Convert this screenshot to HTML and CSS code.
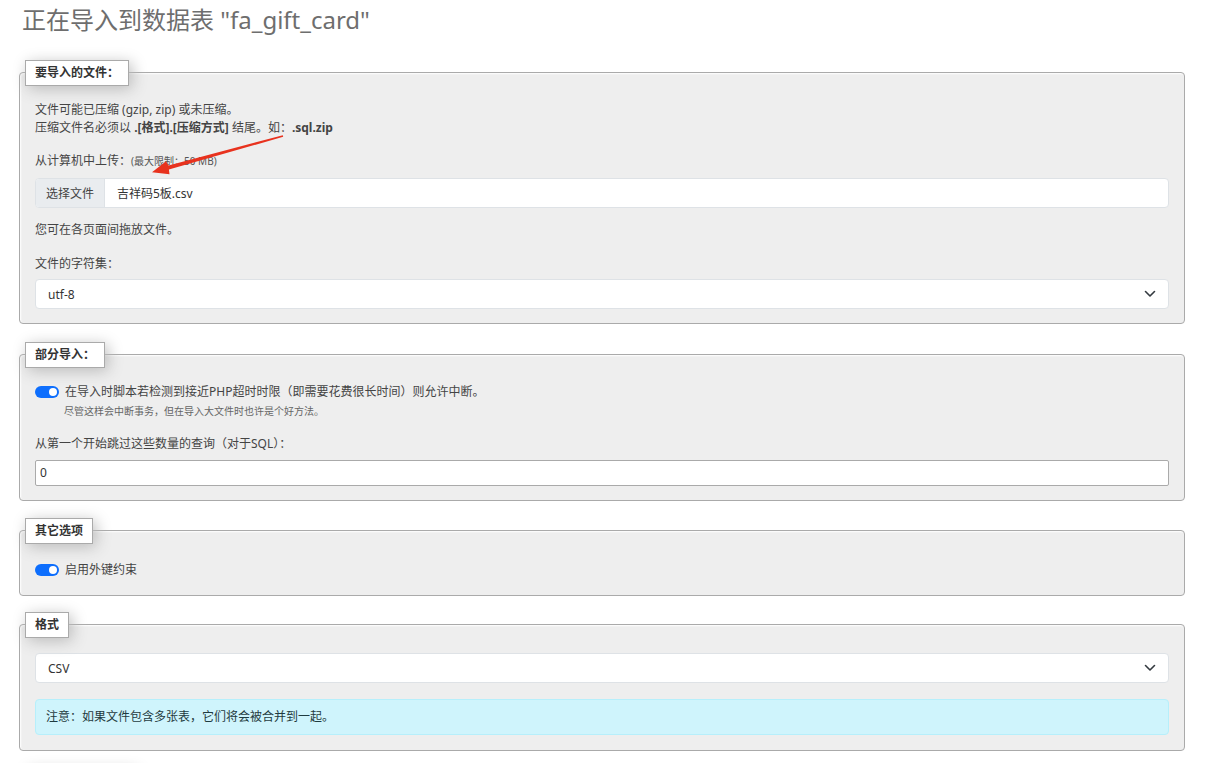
FILE: index.html
```html
<!DOCTYPE html>
<html lang="zh-CN">
<head>
<meta charset="utf-8">
<title>导入</title>
<link rel="stylesheet" href="styles.css">
</head>
<body>
<div class="page">
  <h2 class="title">正在导入到数据表 "fa_gift_card"</h2>

  <section class="fs fs-file">
    <div class="legend">要导入的文件：</div>
    <div class="box">
      <p class="line">文件可能已压缩 (gzip, zip) 或未压缩。</p>
      <p class="line">压缩文件名必须以 <b>.[格式].[压缩方式]</b> 结尾。如：<b>.sql.zip</b></p>
      <p class="line label-upload">从计算机中上传：<span class="small">(最大限制：50 MB)</span></p>
      <div class="file-group">
        <span class="file-btn">选择文件</span>
        <span class="file-name">吉祥码5板.csv</span>
      </div>
      <p class="line drop">您可在各页面间拖放文件。</p>
      <p class="line charset">文件的字符集：</p>
      <div class="select">
        <span>utf-8</span>
        <svg class="chev" width="12" height="8" viewBox="0 0 12 8"><path d="M1.5 1.5 6 6l4.5-4.5" fill="none" stroke="#343a40" stroke-width="1.6" stroke-linecap="round" stroke-linejoin="round"/></svg>
      </div>
    </div>
  </section>

  <section class="fs fs-partial">
    <div class="legend">部分导入：</div>
    <div class="box">
      <div class="switch-row">
        <span class="switch"><span class="knob"></span></span>
        <span>在导入时脚本若检测到接近PHP超时时限（即需要花费很长时间）则允许中断。</span>
      </div>
      <p class="hint">尽管这样会中断事务，但在导入大文件时也许是个好方法。</p>
      <p class="line skip">从第一个开始跳过这些数量的查询（对于SQL）：</p>
      <div class="num-input">0</div>
    </div>
  </section>

  <section class="fs fs-other">
    <div class="legend">其它选项</div>
    <div class="box">
      <div class="switch-row">
        <span class="switch"><span class="knob"></span></span>
        <span>启用外键约束</span>
      </div>
    </div>
  </section>

  <section class="fs fs-format">
    <div class="legend">格式</div>
    <div class="box">
      <div class="select">
        <span>CSV</span>
        <svg class="chev" width="12" height="8" viewBox="0 0 12 8"><path d="M1.5 1.5 6 6l4.5-4.5" fill="none" stroke="#343a40" stroke-width="1.6" stroke-linecap="round" stroke-linejoin="round"/></svg>
      </div>
      <div class="alert">注意：如果文件包含多张表，它们将会被合并到一起。</div>
    </div>
  </section>

  <section class="fs fs-next">
    <div class="legend">&nbsp;</div>
  </section>

  <svg class="arrow" width="1211" height="763" viewBox="0 0 1211 763">
    <polygon points="282.8,135.2 168.5,165.6 166,161.2 152,172.2 169.5,174.2 168.9,169.4 283.2,136.8" fill="#e8321e"/>
  </svg>
</div>
</body>
</html>
```

FILE: styles.css
```css
* { box-sizing: border-box; }
html, body { margin: 0; padding: 0; background: #fff; }
body {
  font-family: "Noto Sans", "Noto Sans CJK SC", sans-serif;
  font-size: 12px;
  color: #444;
}
.page {
  position: relative;
  width: 1211px;
  height: 763px;
  overflow: hidden;
  padding: 0 26px 0 19px;
}
.title {
  margin: 5px 0 0 3px;
  font-size: 24px;
  line-height: 30px;
  font-weight: normal;
  color: #6e6e6e;
  font-family: "Noto Sans", "Noto Sans CJK SC", sans-serif;
}
.fs { margin-top: 18px; }
.fs-file { margin-top: 25px; }
.legend {
  position: relative;
  z-index: 1;
  display: inline-block;
  margin-left: 6px;
  height: 26px;
  line-height: 24px;
  padding: 0 9px;
  background: #fff;
  border: 1px solid #aaa;
  font-weight: bold;
  color: #333;
  box-shadow: 3px 3px 15px #bbb;
}
.box {
  margin-top: -14px;
  background: #eee;
  border: 1px solid #aaa;
  border-radius: 4px;
  padding: 28px 15px 14px;
  box-shadow: 1px 1px 2px #fff inset;
}
p { margin: 0; }
.line { line-height: 18px; }
.small { font-size: 10px; color: #555; }
.label-upload { margin-top: 15px; }
.file-group {
  margin-top: 8px;
  display: flex;
  height: 30px;
  border: 1px solid #dee2e6;
  border-radius: 4px;
  background: #fff;
  overflow: hidden;
}
.file-btn {
  width: 69px;
  background: #e9ecef;
  border-right: 1px solid #dee2e6;
  display: flex;
  align-items: center;
  justify-content: center;
  color: #444;
}
.file-name {
  display: flex;
  align-items: center;
  padding-left: 12px;
  color: #333;
}
.drop { margin-top: 13px; }
.charset { margin-top: 16px; }
.select {
  margin-top: 6px;
  height: 30px;
  display: flex;
  align-items: center;
  justify-content: space-between;
  padding: 0 12px;
  background: #fff;
  border: 1px solid #dee2e6;
  border-radius: 4px;
  color: #333;
}
.switch-row {
  display: flex;
  align-items: center;
  gap: 6px;
  line-height: 18px;
  color: #444;
}
.switch {
  width: 24px;
  height: 12px;
  border-radius: 6px;
  background: #0d6efd;
  display: flex;
  align-items: center;
  justify-content: flex-end;
  padding-right: 2px;
  flex: none;
}
.knob {
  width: 8px;
  height: 8px;
  border-radius: 50%;
  background: #fff;
}
.hint {
  margin-left: 29px;
  font-size: 10px;
  line-height: 14px;
  margin-top: 3px;
  color: #666;
}
.skip { margin-top: 17px; }
.num-input {
  margin-top: 7px;
  height: 26px;
  line-height: 24px;
  padding-left: 4px;
  background: #fff;
  border: 1px solid #aaa;
  border-radius: 2px;
  color: #333;
}
.fs-other .box { padding-top: 30px; padding-bottom: 16px; }
.fs-other { margin-top: 17px; }
.fs-format { margin-top: 16px; }
.fs-format .box { padding-top: 28px; padding-bottom: 15px; }
.fs-format .select { margin-top: 0; }
.alert {
  margin-top: 16px;
  height: 36px;
  line-height: 34px;
  padding: 0 10px;
  background: #cff4fc;
  border: 1px solid #b6effb;
  border-radius: 4px;
  color: #1f3b40;
}
.fs-next { margin-top: 17px; }
.fs-next .legend { width: 110px; }
.arrow {
  position: absolute;
  left: 0;
  top: 0;
  pointer-events: none;
}
```
